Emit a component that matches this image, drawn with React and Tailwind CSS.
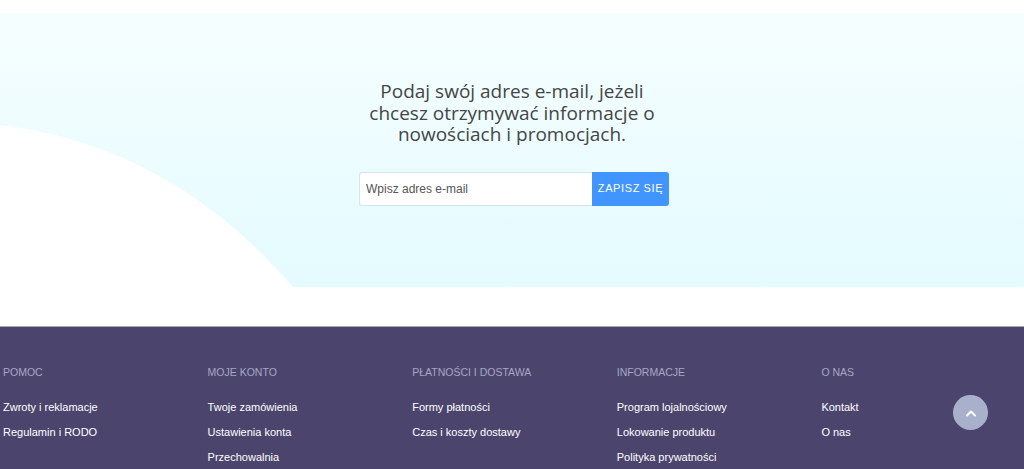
export default function App() {
  const columns = [
    { title: 'POMOC', links: ['Zwroty i reklamacje', 'Regulamin i RODO'] },
    { title: 'MOJE KONTO', links: ['Twoje zamówienia', 'Ustawienia konta', 'Przechowalnia'] },
    { title: 'PŁATNOŚCI I DOSTAWA', links: ['Formy płatności', 'Czas i koszty dostawy'] },
    { title: 'INFORMACJE', links: ['Program lojalnościowy', 'Lokowanie produktu', 'Polityka prywatności'] },
    { title: 'O NAS', links: ['Kontakt', 'O nas'] },
  ]

  return (
    <div className="relative w-[1024px] h-[469px] overflow-hidden bg-white">
      <div className="h-[13px]" />

      {/* newsletter */}
      <section className="relative h-[274px] bg-gradient-to-b from-[#f5feff] to-[#e4fbff]">
        <svg className="absolute left-0 bottom-0 w-[293px] h-[162px]" viewBox="0 0 293 162" preserveAspectRatio="none">
          <path d="M0 0 Q170 20 293 162 L0 162 Z" fill="#ffffff" />
        </svg>
        <div className="relative flex flex-col items-center pt-[68px]">
          <h2 className="text-center text-[19px] leading-[21.5px] text-[#454545] font-['Open_Sans',sans-serif]">
            Podaj swój adres e-mail, jeżeli<br />
            chcesz otrzymywać informacje o<br />
            nowościach i promocjach.
          </h2>
          <form className="mt-[26px] ml-[4px] flex h-[34px]" onSubmit={(e) => e.preventDefault()}>
            <input
              type="text"
              placeholder="Wpisz adres e-mail"
              className="w-[233px] h-full rounded-l-[3px] border border-r-0 border-[#d3e6f7] bg-white px-[6px] text-[12px] text-[#444] placeholder:text-[#555] outline-none font-['Liberation_Sans',Arial,sans-serif]"
            />
            <button className="w-[77px] h-full rounded-r-[3px] bg-[#4294ff] text-white text-[11px] tracking-[0.6px] font-['Liberation_Sans',Arial,sans-serif]">
              ZAPISZ SIĘ
            </button>
          </form>
        </div>
      </section>

      <div className="h-[39px]" />

      {/* footer */}
      <footer className="h-[143px] border-t border-[#a9a5bb] bg-[#4b456d] font-['Liberation_Sans',Arial,sans-serif]">
        <div className="grid grid-cols-[repeat(5,204.6px)] pl-[3px] pt-[38px]">
          {columns.map((col) => (
            <div key={col.title}>
              <h3 className="text-[10.5px] leading-[14px] text-[#a8a5c4]">{col.title}</h3>
              <ul className="mt-[16px]">
                {col.links.map((l) => (
                  <li key={l} className="text-[11px] leading-[25px] text-white">{l}</li>
                ))}
              </ul>
            </div>
          ))}
        </div>
      </footer>

      <button className="absolute left-[953px] top-[395px] w-[35px] h-[35px] rounded-full bg-[#a9b0cc] flex items-center justify-center">
        <svg width="12" height="8" viewBox="0 0 12 8" fill="none" stroke="white" strokeWidth="2" strokeLinecap="round" strokeLinejoin="round">
          <path d="M2 6.5 L6 2.5 L10 6.5" />
        </svg>
      </button>
    </div>
  )
}
